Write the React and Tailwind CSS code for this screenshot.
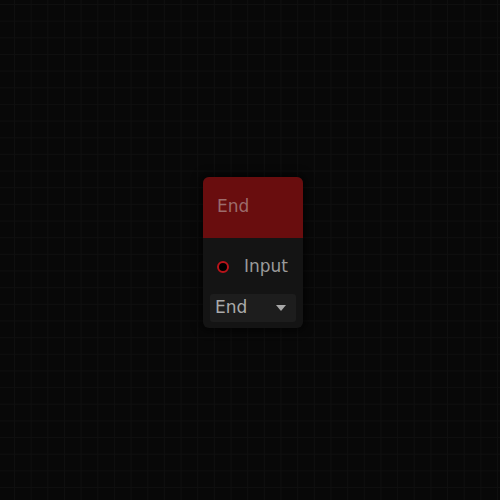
import React from 'react'

function NodeCard() {
  return (
    <div className="w-[100px] rounded-[6px] bg-[#141414] shadow-[0_0_8px_3px_rgba(0,0,0,0.6)] overflow-hidden">
      <div className="h-[61px] bg-[#690d0e] flex items-center pl-[14px] pb-[1px]">
        <span className="text-[17px] text-[#9c6c6c]">End</span>
      </div>
      <div className="flex items-center h-[56px] pl-[14px] pt-[1px]">
        <span className="w-[12px] h-[12px] rounded-full border-2 border-[#b8141a] bg-black" />
        <span className="ml-[15px] text-[17px] text-[#9a9a9a]">Input</span>
      </div>
      <div className="px-[7px] pb-[6px]">
        <div className="h-[28px] rounded-[3px] bg-[#1d1d1d] flex items-center justify-between pl-[5px] pr-[10px]">
          <span className="text-[17px] text-[#ababab]">End</span>
          <svg width="10" height="6" viewBox="0 0 10 6">
            <path d="M0 0 L10 0 L5 6 Z" fill="#a8a8a8" />
          </svg>
        </div>
      </div>
    </div>
  )
}

export default function App() {
  return (
    <div
      className="w-[500px] h-[500px] bg-[#080808] flex items-center justify-center pl-[6px] pt-[5px] font-['DejaVu_Sans',sans-serif]"
      style={{
        backgroundImage:
          'linear-gradient(to right, #0f0f0f 1px, transparent 1px), linear-gradient(to bottom, #0f0f0f 1px, transparent 1px)',
        backgroundSize: '16.67px 16.67px',
        backgroundPosition: '14px 4px',
      }}
    >
      <NodeCard />
    </div>
  )
}
